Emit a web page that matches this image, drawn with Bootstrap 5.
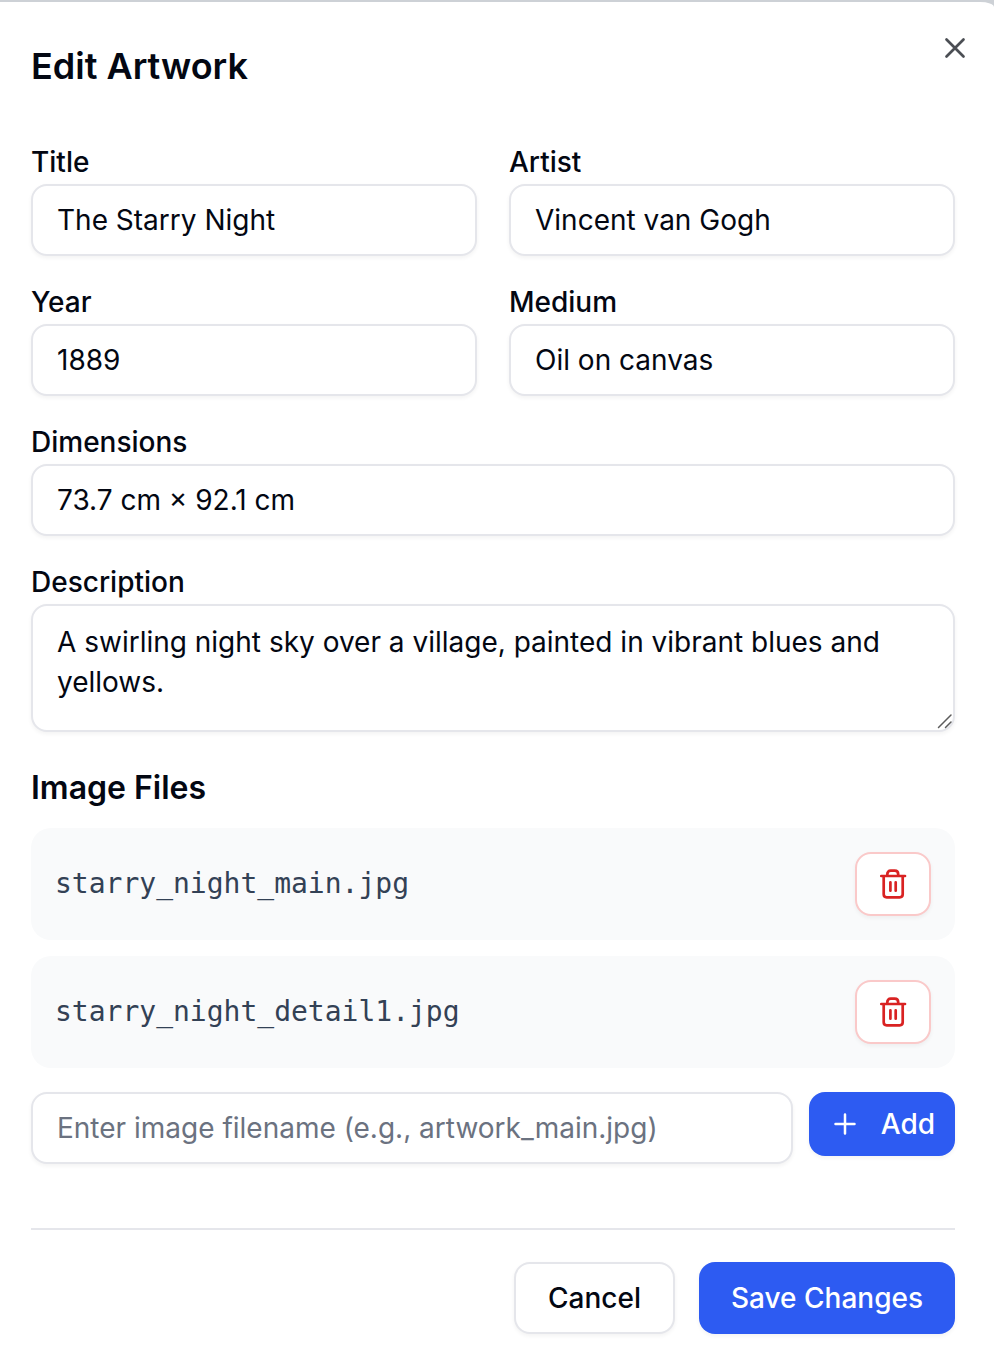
<!DOCTYPE html>
<html lang="en">
<head>
<meta charset="utf-8">
<meta name="viewport" content="width=device-width, initial-scale=1">
<title>Edit Artwork</title>
<link href="https://cdn.jsdelivr.net/npm/bootstrap@5.3.0/dist/css/bootstrap.min.css" rel="stylesheet">
<style>
  body { font-family: "Inter", sans-serif; font-size: 28px; line-height: 40px; color: #030712; background: #cdd1d6; overflow: hidden; }
  .dialog-panel { height: 1366px; padding: 0 39px 0 31px; border-top: 2px solid #cdd1d6; border-top-right-radius: 14px 7px; background: #fff; }
  .dialog-close { top: 34px; right: 25px; width: 28px; height: 28px; color: #4b4e54; }
  .dialog-title { font-size: 36px; font-weight: 600; line-height: 44px; padding-top: 42px; margin-bottom: 56px; }
  .form-fields { --bs-gutter-x: 32px; --bs-gutter-y: 28px; }
  .form-label { display: block; font-weight: 500; line-height: 36px; margin-bottom: 4px; }
  .form-control { height: 72px; padding: 0 24px; border: 2px solid #e5e6eb; border-radius: 16px; font-size: 28px; line-height: 40px; color: #030712; box-shadow: 0 2px 4px rgba(0,0,0,.05); }
  textarea.form-control { height: 128px; min-height: 128px; padding-top: 16px; padding-bottom: 16px; overflow: hidden; resize: none; }
  .form-control::placeholder { color: #6b7280; opacity: 1; }
  .section-title { font-size: 32px; font-weight: 600; line-height: 48px; margin: 32px 0 16px; }
  .file-item { height: 112px; padding: 0 24px; border-radius: 20px; background: #f9fafb; }
  .file-name { font-family: "DejaVu Sans Mono", monospace; font-size: 28px; color: #334155; }
  .btn { font-size: 28px; font-weight: 500; line-height: 40px; border-radius: 16px; border: 0; padding: 0; box-shadow: 0 2px 4px rgba(0,0,0,.05); }
  .btn-trash { width: 76px; height: 64px; border: 2px solid #fac9c9; background: #fff; color: #d92222; }
  .btn-blue { background: #2d5bf2; color: #fff; }
  .btn-add { width: 146px; height: 64px; padding: 0 20px 0 24px; }
  .btn-cancel { width: 161px; height: 72px; border: 2px solid #e5e6eb; background: #fff; color: #030712; }
  .btn-save { width: 256px; height: 72px; }
  .dialog-actions { margin-top: 64px; padding-top: 32px; border-top: 2px solid #e5e6eb; gap: 24px; }
  svg { display: block; fill: none; stroke: currentColor; stroke-linecap: round; stroke-linejoin: round; }
  .grip { right: 1px; bottom: 2px; width: 18px; height: 18px; color: #5c5c5c; }
</style>
</head>
<body>
<main class="dialog-panel position-relative">
  <svg class="dialog-close position-absolute" role="button" aria-label="Close" viewBox="0 0 28 28" stroke-width="2.7"><path d="M5.500 3.500 22.500 20.500M22.500 3.500 5.500 20.500"/></svg>
  <h1 class="dialog-title">Edit Artwork</h1>
  <form>
    <div class="row form-fields">
      <div class="col-6"><label class="form-label" for="title">Title</label><input id="title" class="form-control" value="The Starry Night"></div>
      <div class="col-6"><label class="form-label" for="artist">Artist</label><input id="artist" class="form-control" value="Vincent van Gogh"></div>
      <div class="col-6"><label class="form-label" for="year">Year</label><input id="year" class="form-control" value="1889"></div>
      <div class="col-6"><label class="form-label" for="medium">Medium</label><input id="medium" class="form-control" value="Oil on canvas"></div>
      <div class="col-12"><label class="form-label" for="dims">Dimensions</label><input id="dims" class="form-control" value="73.7 cm × 92.1 cm"></div>
      <div class="col-12"><label class="form-label" for="desc">Description</label>
        <div class="position-relative"><textarea id="desc" class="form-control">A swirling night sky over a village, painted in vibrant blues and yellows.</textarea>
          <svg class="grip position-absolute" viewBox="0 0 18 18" stroke-width="1.5"><path d="M2.500 15.500 15 3M9.500 15.500 15 10"/></svg></div></div>
    </div>
    <h2 class="section-title">Image Files</h2>
    <div class="d-flex flex-column gap-3 mb-4">
      <div class="file-item d-flex align-items-center justify-content-between">
        <span class="file-name">starry_night_main.jpg</span>
        <button type="button" class="btn btn-trash d-flex align-items-center justify-content-center" aria-label="Delete"><svg width="32" height="32" viewBox="0 0 32 32" stroke-width="2.700"><path d="M4.300 8H28M6.700 8V26.300Q6.700 29.300 9.700 29.300H22.700Q25.700 29.300 25.700 26.300V8M10.300 8V6.300Q10.300 2.700 13.800 2.700H17.700Q21.200 2.700 21.200 6.300V8M13.400 14.300V22.700M18.700 14.300V22.700"/></svg></button>
      </div>
      <div class="file-item d-flex align-items-center justify-content-between">
        <span class="file-name">starry_night_detail1.jpg</span>
        <button type="button" class="btn btn-trash d-flex align-items-center justify-content-center" aria-label="Delete"><svg width="32" height="32" viewBox="0 0 32 32" stroke-width="2.700"><path d="M4.300 8H28M6.700 8V26.300Q6.700 29.300 9.700 29.300H22.700Q25.700 29.300 25.700 26.300V8M10.300 8V6.300Q10.300 2.700 13.800 2.700H17.700Q21.200 2.700 21.200 6.300V8M13.400 14.300V22.700M18.700 14.300V22.700"/></svg></button>
      </div>
    </div>
    <div class="d-flex align-items-start gap-3">
      <input class="form-control" aria-label="Image filename" placeholder="Enter image filename (e.g., artwork_main.jpg)">
      <button type="button" class="btn btn-blue btn-add flex-shrink-0 d-flex align-items-center justify-content-between"><svg width="24" height="24" viewBox="0 0 24 24" stroke-width="2.500"><path d="M2.500 12H21.500M12 2.500V21.500"/></svg><span>Add</span></button>
    </div>
    <div class="dialog-actions d-flex justify-content-end">
      <button type="button" class="btn btn-cancel">Cancel</button>
      <button type="button" class="btn btn-blue btn-save">Save Changes</button>
    </div>
  </form>
</main>
<script src="https://cdn.jsdelivr.net/npm/bootstrap@5.3.0/dist/js/bootstrap.bundle.min.js"></script>
</body>
</html>
